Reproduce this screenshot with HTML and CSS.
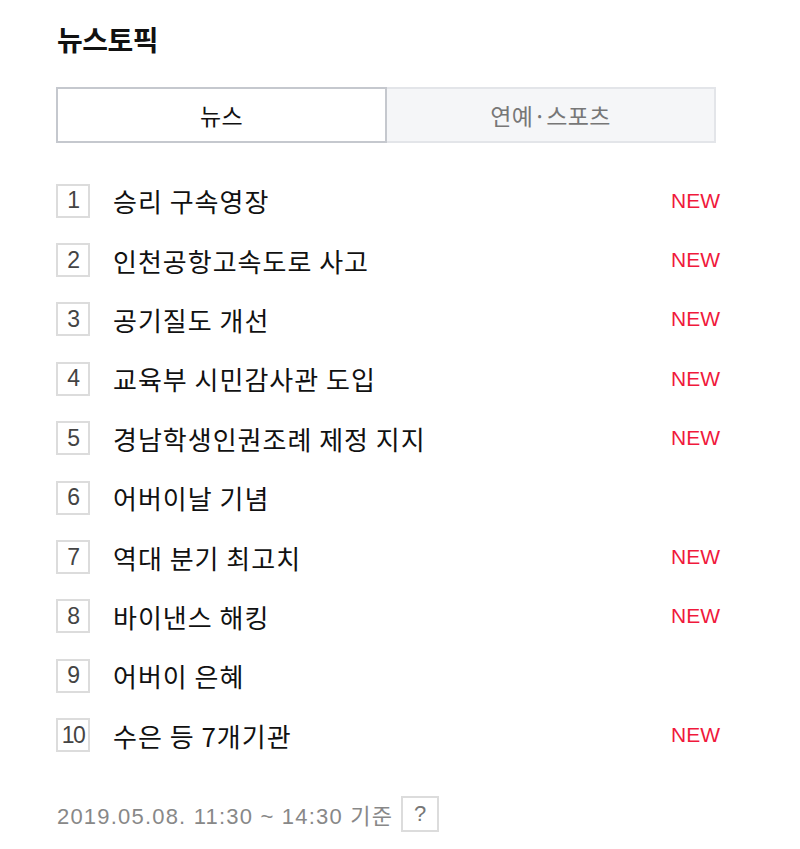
FILE: index.html
```html
<html>
<head>
<meta charset="utf-8">
<meta name="viewport" content="width=device-width, initial-scale=1">
<title>뉴스토픽</title>
<link rel="stylesheet" href="styles.css">
</head>
<body>
<div class="topic">
  <h2 class="title">뉴스토픽</h2>
  <div class="tabs">
    <span class="tab on">뉴스</span>
    <span class="tab">연예·스포츠</span>
  </div>
  <ol class="rank">
    <li><span class="num">1</span><span class="word">승리 구속영장</span><span class="new">NEW</span></li>
    <li><span class="num">2</span><span class="word">인천공항고속도로 사고</span><span class="new">NEW</span></li>
    <li><span class="num">3</span><span class="word">공기질도 개선</span><span class="new">NEW</span></li>
    <li><span class="num">4</span><span class="word">교육부 시민감사관 도입</span><span class="new">NEW</span></li>
    <li><span class="num">5</span><span class="word">경남학생인권조례 제정 지지</span><span class="new">NEW</span></li>
    <li><span class="num">6</span><span class="word">어버이날 기념</span></li>
    <li><span class="num">7</span><span class="word">역대 분기 최고치</span><span class="new">NEW</span></li>
    <li><span class="num">8</span><span class="word">바이낸스 해킹</span><span class="new">NEW</span></li>
    <li><span class="num">9</span><span class="word">어버이 은혜</span></li>
    <li><span class="num">10</span><span class="word">수은 등 7개기관</span><span class="new">NEW</span></li>
  </ol>
  <p class="time">2019.05.08. 11:30 ~ 14:30 기준 <span class="help">?</span></p>
</div>
</body>
</html>
```

FILE: styles.css
```css
html, body {
  margin: 0;
  padding: 0;
  background: #fff;
}

body {
  font-family: "Noto Sans CJK KR", "Noto Sans", sans-serif;
  color: #111;
}

.topic {
  width: 660px;
  padding: 16px 0 0 56px;
}

.title {
  margin: 0 0 0 1px;
  font-size: 28px;
  font-weight: bold;
  line-height: 46px;
  letter-spacing: -0.5px;
}

.tabs {
  display: flex;
  margin-top: 25px;
}

.tab {
  flex: 1;
  height: 52px;
  display: flex;
  align-items: center;
  justify-content: center;
  font-size: 23px;
  letter-spacing: 0.3px;
  color: #777;
  background: #f5f6f8;
  border: 2px solid #e3e5e9;
  border-left: 0;
}

.tab.on {
  color: #111;
  background: #fff;
  border: 2px solid #c5c8ce;
}

.rank {
  list-style: none;
  margin: 28px 0 0;
  padding: 0;
}

.rank li {
  display: flex;
  align-items: center;
  height: 59.4px;
}

.num {
  width: 30px;
  height: 30px;
  border: 2px solid #dcdcdc;
  display: flex;
  align-items: center;
  justify-content: center;
  font-family: "Liberation Sans", sans-serif;
  font-size: 23px;
  color: #444;
  letter-spacing: -1.5px;
}

.word {
  flex: 1;
  margin-left: 23px;
  font-size: 26px;
  letter-spacing: 1px;
}

.new {
  color: #f0193c;
  font-size: 21px;
  font-family: "Liberation Sans", sans-serif;
  margin-right: -4px;
}

.time {
  margin: 31px 0 0 1px;
  font-family: "Liberation Sans", "Noto Sans CJK KR", sans-serif;
  font-size: 22px;
  letter-spacing: 1.2px;
  color: #888;
  display: flex;
  align-items: center;
  gap: 8px;
}

.help {
  width: 34px;
  height: 32px;
  border: 2px solid #dcdcdc;
  display: flex;
  align-items: center;
  justify-content: center;
  color: #777;
  font-size: 22px;
  letter-spacing: 0;
}
```
